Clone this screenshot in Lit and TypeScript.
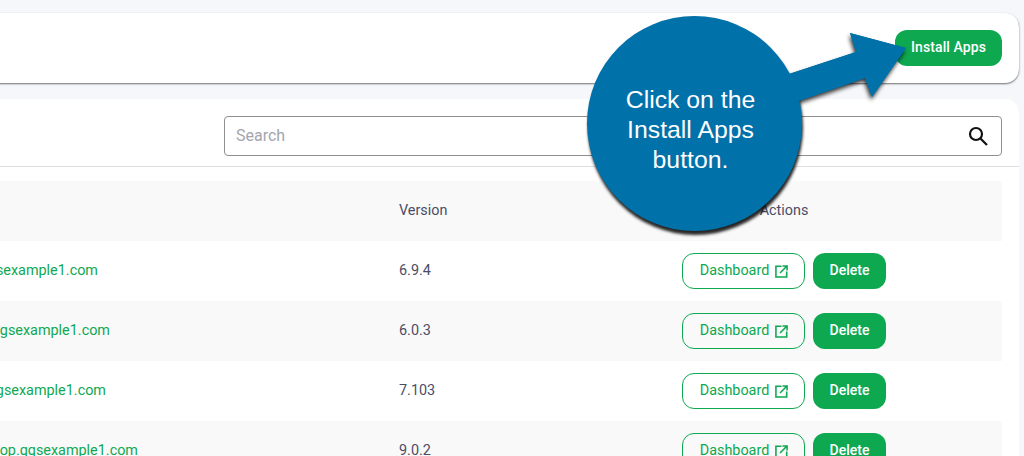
import { LitElement, html, css, svg } from "lit";
import { customElement } from "lit/decorators.js";

const rows = [
  { site: "ggsexample1.com", end: 98, version: "6.9.4" },
  { site: "ggsexample1.com", end: 110, version: "6.0.3" },
  { site: "ggsexample1.com", end: 106, version: "7.103" },
  { site: "shop.ggsexample1.com", end: 138, version: "9.0.2" },
];

const extIcon = svg`<svg class="ext" viewBox="0 0 14 14" width="13" height="13" fill="none" stroke="currentColor" stroke-width="1.7"><path d="M7 1.4H1v11.6h11.6V7"/><path d="M5.4 8.6 12.6 1.4M8 1h5v5" /></svg>`;

@customElement("app-root")
export class AppRoot extends LitElement {
  static styles = css`
    :host {
      display: block;
      position: relative;
      width: 1024px;
      height: 456px;
      overflow: hidden;
      background: #f6f7fb;
      font-family: Roboto, "Liberation Sans", sans-serif;
      font-size: 14.4px;
      color: #4b4d66;
    }
    .page {
      display: flex;
      flex-direction: column;
      gap: 16px;
      margin: 0 5px 0 -30px;
      padding-top: 13px;
    }
    .card {
      background: #fff;
      border-radius: 14px;
    }
    .top {
      height: 70px;
      box-sizing: border-box;
      display: flex;
      align-items: center;
      justify-content: flex-end;
      padding: 0 17px;
      box-shadow: 0 1px 2px rgba(0, 0, 0, 0.55);
    }
    .btn {
      display: inline-flex;
      align-items: center;
      justify-content: center;
      gap: 6px;
      box-sizing: border-box;
      height: 36px;
      border-radius: 12px;
      padding-bottom: 2px;
      font-weight: 500;
      font-size: 14px;
    }
    .solid {
      background: #0ea851;
      color: #fff;
    }
    .install {
      width: 107px;
      letter-spacing: 0.08px;
    }
    .delete {
      width: 73px;
    }
    .outline {
      width: 123px;
      border: 1px solid #0ea851;
      color: #0ea851;
      font-weight: 400;
      font-size: 14.4px;
      padding-left: 1px;
    }
    .ext {
      margin-top: 2px;
    }
    .panel {
      height: 400px;
      overflow: hidden;
    }
    .search-row {
      display: flex;
      justify-content: flex-end;
      padding: 17px 17px 10px;
      border-bottom: 1px solid #dedede;
    }
    .search {
      width: 778px;
      height: 40px;
      box-sizing: border-box;
      border: 1px solid #8f8f8f;
      border-radius: 4px;
      display: flex;
      align-items: center;
      justify-content: space-between;
      padding: 0 13px 2px 11px;
      font-size: 16px;
      color: #a3a6ad;
    }
    .search svg {
      margin-top: 2px;
    }
    .table {
      padding: 14px 17px 0 0;
    }
    .row {
      display: grid;
      grid-template-columns: 429px 283px 204px 1fr;
      height: 60px;
      align-items: center;
      padding-bottom: 1px;
      box-sizing: border-box;
    }
    .row:nth-child(odd) {
      background: #f9f9f9;
    }
    .site {
      color: #0ea851;
      white-space: nowrap;
      display: flex;
      justify-content: flex-end;
    }
    .actions {
      display: flex;
      gap: 8px;
      margin-top: 1px;
    }
    .head-actions {
      text-align: center;
    }
    .bubble {
      position: absolute;
      left: 587px;
      top: 16px;
      width: 215px;
      height: 215px;
      border-radius: 50%;
      background: #0071a9;
      box-shadow: 1px 4px 3px rgba(0, 0, 0, 0.85);
      color: #fff;
      font-family: "Liberation Sans", Arial, sans-serif;
      font-size: 24.8px;
      line-height: 30px;
      text-align: center;
      display: flex;
      align-items: center;
      justify-content: center;
      padding: 12px 8px 0 0;
      box-sizing: border-box;
    }
    .arrow {
      position: absolute;
      left: 760px;
      top: 20px;
      filter: drop-shadow(-1px 3px 2px rgba(0, 0, 0, 0.8));
    }
    .arrow-fill {
      position: absolute;
      left: 760px;
      top: 20px;
    }
  `;

  private arrowShape() {
    return svg`<path fill="#0071a9" d="M29 54 96 32 90 13 146 28 112 77 105 58 30 84Z"/>`;
  }

  render() {
    return html`
      <div class="page">
        <div class="card top"><span class="btn solid install">Install Apps</span></div>
        <div class="card panel">
          <div class="search-row">
            <div class="search">
              <span>Search</span>
              <svg width="20" height="20" viewBox="0 0 20 20" fill="none" stroke="#111" stroke-width="2.2">
                <circle cx="8" cy="8" r="6"/>
                <path d="M12.5 12.5 19 19"/>
              </svg>
            </div>
          </div>
          <div class="table">
            <div class="row">
              <span></span><span>Version</span><span class="head-actions">Actions</span><span></span>
            </div>
            ${rows.map(
              (r) => html`<div class="row">
                <span class="site" style="width:${r.end + 30}px">${r.site}</span>
                <span>${r.version}</span>
                <span class="actions">
                  <span class="btn outline">Dashboard ${extIcon}</span>
                  <span class="btn solid delete">Delete</span>
                </span>
                <span></span>
              </div>`
            )}
          </div>
        </div>
      </div>
      <svg class="arrow" width="160" height="100" viewBox="0 0 160 100">${this.arrowShape()}</svg>
      <div class="bubble"><span>Click on the<br />Install Apps<br />button.</span></div>
      <svg class="arrow-fill" width="160" height="100" viewBox="0 0 160 100">${this.arrowShape()}</svg>
    `;
  }
}
